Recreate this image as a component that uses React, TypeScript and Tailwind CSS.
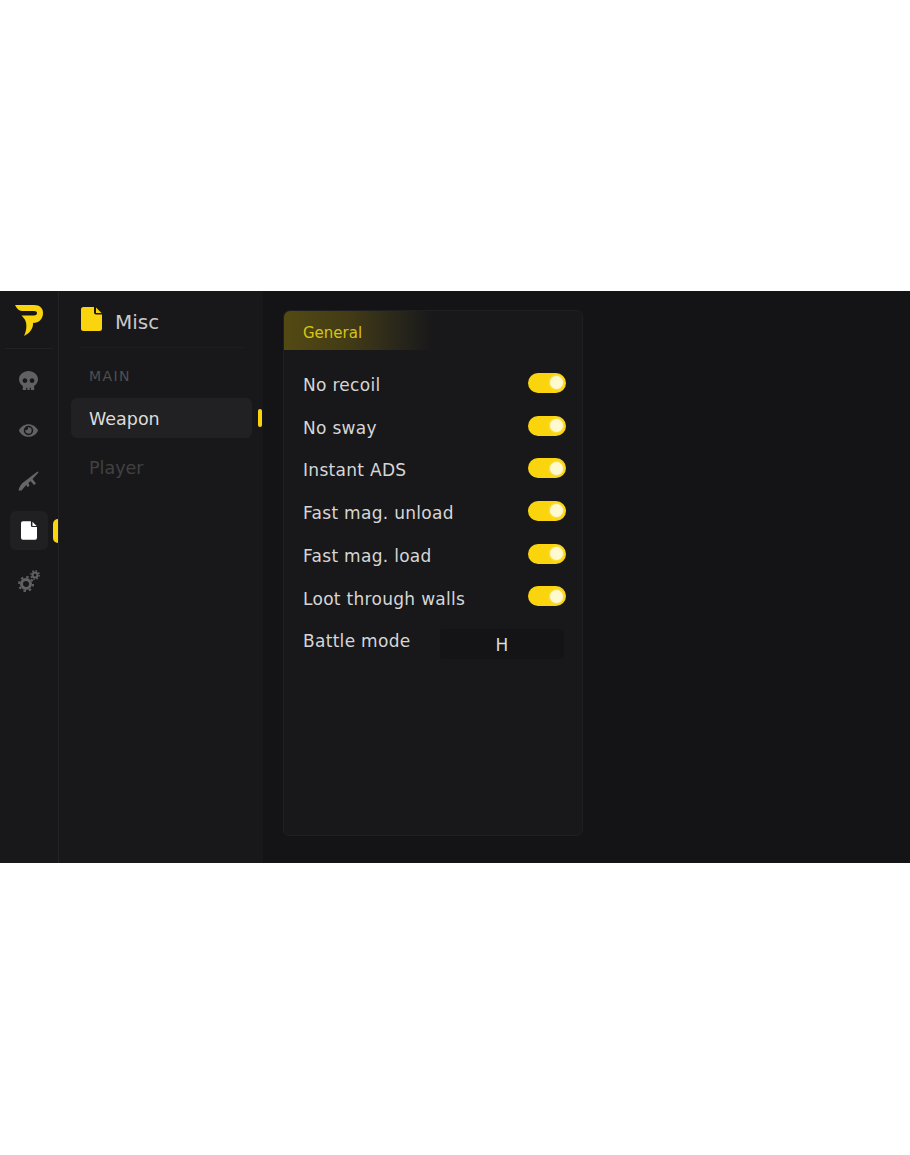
import { FaEye, FaSkull } from 'react-icons/fa'

const toggles = ['No recoil', 'No sway', 'Instant ADS', 'Fast mag. unload', 'Fast mag. load', 'Loot through walls']

function FileIcon({ className }: { className: string }) {
  return (
    <svg viewBox="0 0 21 24" className={className} fill="currentColor">
      <path d="M2.5 0H13v5.500a2 2 0 0 0 2 2h6V21.500a2.500 2.500 0 0 1-2.500 2.500h-16A2.500 2.500 0 0 1 0 21.500v-19A2.500 2.500 0 0 1 2.500 0Z" />
      <path d="M15 0.500 20.500 6H15Z" />
    </svg>
  )
}

function Logo() {
  return (
    <svg viewBox="0 0 28 32" className="h-8 w-7 text-[#fad40c]" fill="currentColor">
      <path d="M0 1H19C25 1 28 4.500 28 9C28 15 24 19 18 19C18.500 24 15 29 9 32C11.500 27 12 21 10.500 17C9.500 14.500 8 13 6.500 11.500H19C21 11.500 22 10.500 22 9C22 7.800 21 7 19 7H7C4 7 1.500 4 0 1Z" />
    </svg>
  )
}

function Rifle() {
  return (
    <svg viewBox="0 0 21 21" className="h-[22px] w-[21px] text-[#666668]" fill="currentColor">
      <path d="M19.500 1L20.500 2L14.500 8.500L18 13L16 14.500L12.500 10.500L10.500 12.500L11.500 15.500L9.500 16.500L8.200 14.500L3.500 20H0.500C1 17 3 13 6.500 11L13 6Z" />
    </svg>
  )
}

function Gears() {
  return (
    <svg viewBox="0 0 22 22" className="h-[22px] w-[22px] text-[#616163]" fill="none" stroke="currentColor">
      <circle cx="8" cy="14" r="4.500" strokeWidth="3" />
      <circle cx="8" cy="14" r="7" strokeWidth="2" strokeDasharray="2.500 3" />
      <circle cx="17" cy="5" r="2.500" strokeWidth="2" />
      <circle cx="17" cy="5" r="4.200" strokeWidth="1.500" strokeDasharray="1.600 1.700" />
    </svg>
  )
}

function Toggle() {
  return (
    <div className="mb-[6px] flex h-5 w-[38px] items-center justify-end rounded-full bg-[#fad40c] pr-[3px]">
      <div className="h-[13px] w-[13px] rounded-full bg-[#fff9d0] shadow-[0_0_3px_#fff6b0]" />
    </div>
  )
}

export default function App() {
  return (
    <div className="h-[1155px] w-[910px] overflow-hidden bg-white pt-[291px] font-['DejaVu_Sans',sans-serif]">
      <div className="flex h-[572px] bg-[#141416]">
        <div className="w-[59px] shrink-0 border-r border-[#232325] bg-[#18181a]">
          <div className="mx-[5px] flex h-[58px] items-center justify-center border-b border-[#212123]">
            <Logo />
          </div>
          <div className="flex flex-col items-center gap-[11px] pt-[12px] pr-[1px]">
            <div className="flex h-[39px] w-[38px] items-center justify-center text-[19px] text-[#616163]">
              <FaSkull />
            </div>
            <div className="flex h-[39px] w-[38px] items-center justify-center text-[19px] text-[#616163]">
              <FaEye />
            </div>
            <div className="flex h-[39px] w-[38px] items-center justify-center">
              <Rifle />
            </div>
            <div className="relative flex h-[39px] w-[38px] items-center justify-center rounded-md bg-[#202022] text-white">
              <FileIcon className="h-[19px] w-4" />
              <div className="absolute top-2 left-[43px] h-6 w-[5px] rounded-l-md bg-[#fad40c]" />
            </div>
            <div className="flex h-[39px] w-[38px] items-center justify-center">
              <Gears />
            </div>
          </div>
        </div>

        <div className="w-[204px] shrink-0 bg-[#18181a]">
          <div className="mx-[20px] flex h-[57px] items-center gap-[13px] border-b border-[#1f1f21] pl-[2px] text-[#fad40c]">
            <FileIcon className="h-6 w-[21px]" />
            <span className="mt-[6px] text-xl leading-none text-[#c9c9c9]">Misc</span>
          </div>
          <div className="px-3 pt-[18px]">
            <div className="pl-[18px] text-sm leading-5 tracking-[1.4px] text-[#4f4f51]">MAIN</div>
            <div className="relative mt-[12px] flex h-10 w-[181px] items-center rounded-md bg-[#212123] pt-[2px] pl-[18px] text-[17.500px] text-[#dcdcdc]">
              Weapon
              <div className="absolute top-[11px] left-[187px] h-[18px] w-1 rounded-sm bg-[#fad40c]" />
            </div>
            <div className="mt-[10px] flex h-10 items-center pl-[18px] text-[17.500px] text-[#414143]">Player</div>
          </div>
        </div>

        <div className="flex-1 px-5 pt-[19px]">
          <div className="h-[526px] w-[300px] rounded-md border border-[#1f1f21] bg-[#18181a]">
            <div className="flex h-[39px] items-center rounded-t-md bg-gradient-to-r from-[#534a13] via-[#423b15] via-22% to-[#18181a] to-50% pt-[5px] pl-[19px] text-[15px] text-[#d8c316]">
              General
            </div>
            <div className="flex flex-col pt-[14.500px] pr-4 pl-[19px] text-[17px] tracking-[0.3px] text-[#d6d6d6]">
              {toggles.map((label) => (
                <div key={label} className="flex h-[42.700px] items-center justify-between">
                  <span>{label}</span>
                  <Toggle />
                </div>
              ))}
              <div className="flex h-[42.700px] items-center justify-between">
                <span>Battle mode</span>
                <div className="mt-[5px] mr-[2px] flex h-[30px] w-[124px] items-center justify-center rounded-sm bg-[#141416] pt-[3px] text-[17px] tracking-normal text-[#dcdcdc]">
                  H
                </div>
              </div>
            </div>
          </div>
        </div>
      </div>
    </div>
  )
}
